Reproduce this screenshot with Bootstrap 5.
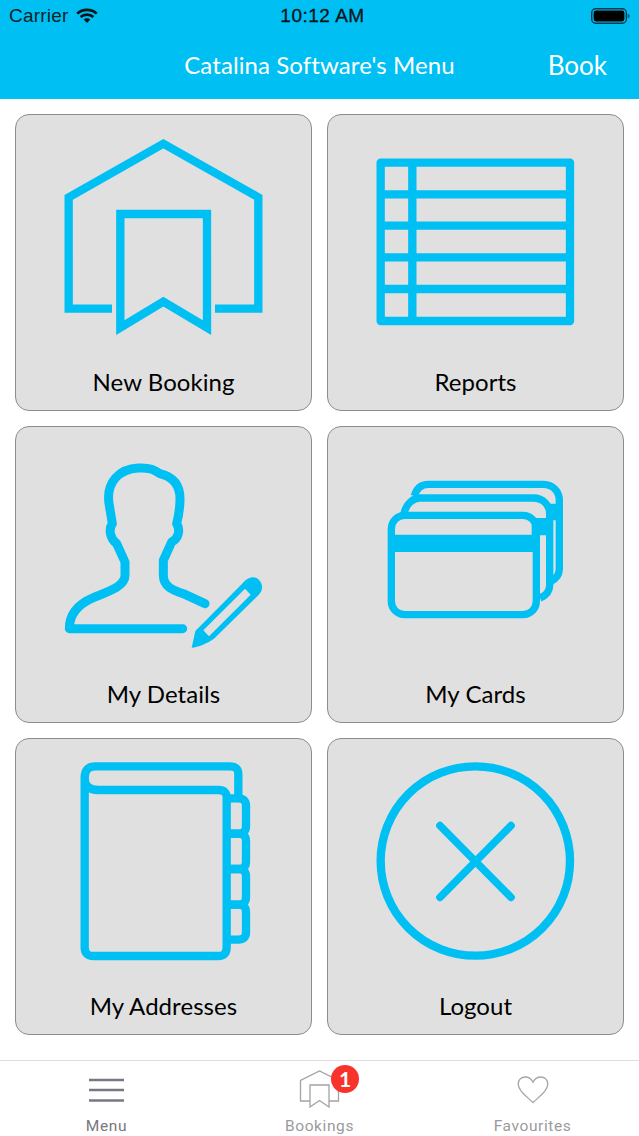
<!DOCTYPE html>
<html lang="en">
<head>
<meta charset="utf-8">
<title>Catalina Software's Menu</title>
<link href="https://cdn.jsdelivr.net/npm/bootstrap@5.3.0/dist/css/bootstrap.min.css" rel="stylesheet">
<style>
html,body{margin:0;height:100%;background:#fff}
.app-page{width:639px;height:1136px;overflow:hidden}
.app-head{height:99px;background:#00bff3;flex:none}
.status-row{height:33px;padding:0 9px;font-family:"Liberation Sans",Arial,sans-serif;font-size:19px;letter-spacing:.2px;color:#0a1f28}
.status-row>div{flex:1 1 0}
.status-row svg{margin-bottom:2px}
.clock{color:#06141a;letter-spacing:.5px;-webkit-text-stroke:.3px #06141a;padding-left:6px}
.title-row{height:66px;display:grid;grid-template-columns:1fr auto 1fr;align-items:center;color:#fff;font-family:Lato,sans-serif}
.nav-title{font-size:24px;letter-spacing:.1px;line-height:1;margin-top:-3px}
.nav-action{font-size:26px;justify-self:end;padding-right:32px;line-height:1;margin-top:-3px}
.tile-wall{display:grid;grid-template-columns:297px 297px;grid-auto-rows:297px;gap:15px;padding:15px 15px 0}
.tile{background:#e0e0e1;border:1px solid #8c8c8e;border-radius:14px;overflow:hidden}
.tile svg{display:block;width:295px;height:235px}
.tile-name{height:26px;line-height:26px;margin-top:19px;text-align:center;color:#000;font-family:Lato,sans-serif;font-size:24px;letter-spacing:.05px}
.ic{fill:none;stroke:#00bff3;stroke-width:25}
.ic-fill{fill:#00bff3;stroke:none}
.ic-person{stroke-width:27}
.ic-cards{stroke-width:22}
.ic-cross{stroke-width:23}
.tab-bar{height:76px;border-top:1px solid #dedee0;background:#fff;margin-top:25px;flex:none}
.tab-item{flex:1 1 0;position:relative;height:75px}
.tab-item svg{display:block;position:absolute}
.icon-menu{left:89px;top:17px}
.icon-book{left:86px;top:9px}
.icon-heart{left:91px;top:15px}
.tab-label{position:absolute;left:0;right:0;top:56px;line-height:18px;text-align:center;font-family:Roboto,sans-serif;font-size:15.5px;letter-spacing:.6px;color:#9a9a9e}
.tab-label.on{color:#77777c}
.alert-dot{position:absolute;left:118px;top:4px;width:28px;height:28px;border-radius:50%;background:#f8332b;color:#fff;font-family:Lato,sans-serif;font-weight:700;font-size:21px;line-height:28px;text-align:center}
</style>
</head>
<body>
<div class="app-page d-flex flex-column">
  <header class="app-head d-flex flex-column">
    <div class="status-row d-flex align-items-center">
      <div class="d-flex align-items-center">
        <span>Carrier</span>
        <svg class="ms-2" width="22" height="16" viewBox="0 0 22 16" aria-hidden="true"><g fill="none" stroke="#06141a" stroke-width="2.6"><path d="M1.2 5.6C6.7 .6 15.3 .6 20.8 5.6"/><path d="M4.6 9C8.2 5.8 13.8 5.8 17.4 9"/></g><path d="M7.7 11.5C9.7 9.9 12.3 9.9 14.3 11.5L11 15Z" fill="#06141a"/></svg>
      </div>
      <div class="clock text-center">10:12 AM</div>
      <div class="d-flex justify-content-end">
        <svg width="39" height="16" viewBox="0 0 39 16" aria-hidden="true"><rect x=".7" y=".7" width="34.6" height="14.6" rx="4" fill="none" stroke="#0a3a4c" stroke-width="1.4"/><rect x="2.6" y="2.6" width="30.8" height="10.8" rx="2.4" fill="#000"/><path d="M36.6 5.4C38 5.8 38.6 6.8 38.6 8S38 10.2 36.6 10.6Z" fill="#0a5a78"/></svg>
      </div>
    </div>
    <div class="title-row">
      <span></span>
      <div class="nav-title">Catalina Software's Menu</div>
      <div class="nav-action">Book</div>
    </div>
  </header>

  <main class="tile-wall">
    <div class="tile card">
      <svg viewBox="18 15 885 705" aria-hidden="true"><g class="ic"><path d="M306 596H176V262L460 101L745 262V596H615"/><path d="M331 312H591V653L460 575L331 653Z"/></g></svg>
      <div class="tile-name">New Booking</div>
    </div>
    <div class="tile card">
      <svg viewBox="24 15 885 705" aria-hidden="true"><g class="ic" stroke-linejoin="round"><rect x="182" y="158" width="568" height="475"/><path d="M182 253H750M182 347H750M182 442H750M182 537H750M277 158V633"/></g></svg>
      <div class="tile-name">Reports</div>
    </div>
    <div class="tile card">
      <svg viewBox="18 15 885 705" aria-hidden="true"><path class="ic ic-person" stroke-linecap="round" stroke-linejoin="round" d="M518 620H178C178 570 215 542 250 527C290 510 345 495 345 460V420L320 365C300 350 295 322 307 305L298 250C285 180 330 140 385 138C420 136 435 145 450 155C490 165 510 190 510 230C510 260 505 285 500 305C512 325 505 350 485 360L460 415V460C460 495 490 505 520 515L585 545"/><path class="ic-fill" fill-rule="evenodd" d="M545 677L556 627L695 487C715 460 740 460 750 478C762 495 755 510 745 520L612 650C590 665 565 675 545 677ZM705 500L722 518L597 643L580 625Z"/></svg>
      <div class="tile-name">My Details</div>
    </div>
    <div class="tile card">
      <svg viewBox="24 15 885 705" aria-hidden="true"><g class="ic ic-cards"><path d="M283 222C290 197 305 187 325 187H670C700 187 718 210 718 235V440C718 460 705 472 692 478"/><path d="M252 275C258 245 280 228 300 228H640C670 228 689 250 689 275V490C689 510 675 522 660 528"/><rect x="214" y="280" width="435" height="298" rx="40"/></g><path class="ic-fill" d="M214 338H649V390H214ZM635 288H689V340H635ZM689 245H718V295H689Z"/></svg>
      <div class="tile-name">My Cards</div>
    </div>
    <div class="tile card">
      <svg viewBox="18 15 885 705" aria-hidden="true"><g class="ic"><path d="M224 135V640Q224 666 250 666H625Q650 666 650 640V190Q650 168 625 168H265Q224 168 224 132Q224 97 255 97H660Q685 97 685 120V190"/><path d="M650 193H685Q708 193 708 215V277Q708 299 685 299H650"/><path d="M650 299H685Q708 299 708 321V383Q708 405 685 405H650"/><path d="M650 405H685Q708 405 708 427V490Q708 512 685 512H650"/><path d="M650 512H685Q708 512 708 534V595Q708 617 685 617H650"/></g></svg>
      <div class="tile-name">My Addresses</div>
    </div>
    <div class="tile card">
      <svg viewBox="24 15 885 705" aria-hidden="true"><g class="ic" stroke-linecap="round"><circle cx="466" cy="381" r="284"/><path class="ic-cross" d="M360 275L573 490M573 275L360 490"/></g></svg>
      <div class="tile-name">Logout</div>
    </div>
  </main>

  <nav class="tab-bar d-flex">
    <div class="tab-item">
      <svg class="icon-menu" width="35" height="24" viewBox="0 0 35 24" aria-hidden="true"><path d="M0 2H35M0 12H35M0 22.500H35" stroke="#7b7782" stroke-width="2.6"/></svg>
      <div class="tab-label on">Menu</div>
    </div>
    <div class="tab-item">
      <svg class="icon-book" width="41" height="38" viewBox="0 0 41 38" aria-hidden="true"><g fill="none" stroke="#a3a3a6" stroke-width="1.3"><path d="M11 31H1.500V10.500L20.500 1L39.500 10.500V31H30"/><path d="M11 15H30V37L20.500 30.500L11 37Z"/></g></svg>
      <div class="alert-dot">1</div>
      <div class="tab-label">Bookings</div>
    </div>
    <div class="tab-item">
      <svg class="icon-heart" width="32" height="28" viewBox="0 0 32 28" aria-hidden="true"><path d="M16 26.500C9 20 1.200 14.500 1.200 8C1.200 3.600 4.500 1 8.200 1C11.500 1 14.500 3 16 6.200C17.500 3 20.500 1 23.800 1C27.500 1 30.800 3.600 30.800 8C30.800 14.500 23 20 16 26.500Z" fill="none" stroke="#a6a6a9" stroke-width="1.300"/></svg>
      <div class="tab-label">Favourites</div>
    </div>
  </nav>
</div>
<script src="https://cdn.jsdelivr.net/npm/bootstrap@5.3.0/dist/js/bootstrap.bundle.min.js"></script>
</body>
</html>
